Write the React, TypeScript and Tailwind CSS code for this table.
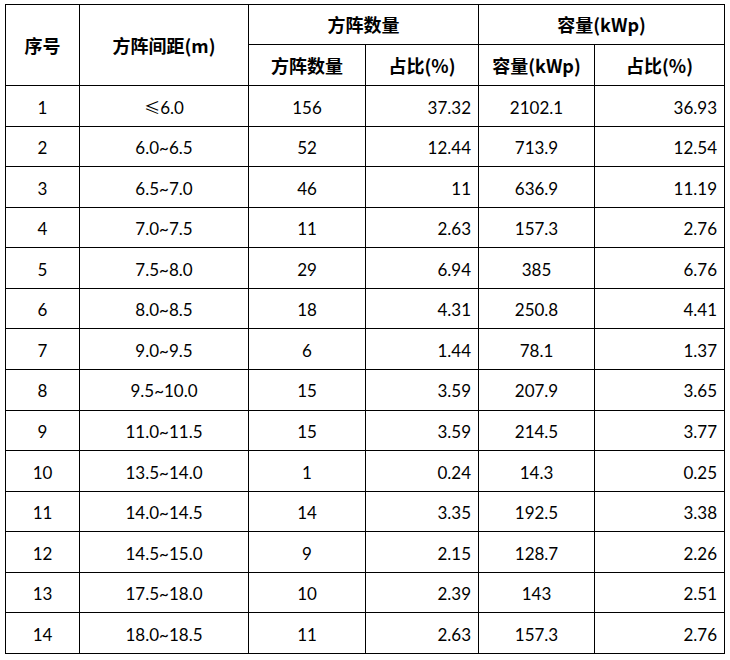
import React from "react";

type Row = {
  no: number;
  spacing: string;
  count: string;
  countPct: string;
  cap: string;
  capPct: string;
};

const rows: Row[] = [
  { no: 1, spacing: "6.0", count: "156", countPct: "37.32", cap: "2102.1", capPct: "36.93" },
  { no: 2, spacing: "6.0~6.5", count: "52", countPct: "12.44", cap: "713.9", capPct: "12.54" },
  { no: 3, spacing: "6.5~7.0", count: "46", countPct: "11", cap: "636.9", capPct: "11.19" },
  { no: 4, spacing: "7.0~7.5", count: "11", countPct: "2.63", cap: "157.3", capPct: "2.76" },
  { no: 5, spacing: "7.5~8.0", count: "29", countPct: "6.94", cap: "385", capPct: "6.76" },
  { no: 6, spacing: "8.0~8.5", count: "18", countPct: "4.31", cap: "250.8", capPct: "4.41" },
  { no: 7, spacing: "9.0~9.5", count: "6", countPct: "1.44", cap: "78.1", capPct: "1.37" },
  { no: 8, spacing: "9.5~10.0", count: "15", countPct: "3.59", cap: "207.9", capPct: "3.65" },
  { no: 9, spacing: "11.0~11.5", count: "15", countPct: "3.59", cap: "214.5", capPct: "3.77" },
  { no: 10, spacing: "13.5~14.0", count: "1", countPct: "0.24", cap: "14.3", capPct: "0.25" },
  { no: 11, spacing: "14.0~14.5", count: "14", countPct: "3.35", cap: "192.5", capPct: "3.38" },
  { no: 12, spacing: "14.5~15.0", count: "9", countPct: "2.15", cap: "128.7", capPct: "2.26" },
  { no: 13, spacing: "17.5~18.0", count: "10", countPct: "2.39", cap: "143", capPct: "2.51" },
  { no: 14, spacing: "18.0~18.5", count: "11", countPct: "2.63", cap: "157.3", capPct: "2.76" },
];

const th =
  "border border-black text-center align-middle font-bold text-[18px] text-black [font-family:'Noto_Sans_CJK_SC',sans-serif]";
const td = "border border-black align-middle text-[17px] text-black pt-[3px]";

const App = () => {
  return (
    <div className="min-h-[660px] w-[730px] bg-white pl-[5px] pt-[4px]">
      <table className="table-fixed border-collapse w-[719px] h-[650px] [font-family:Lato,'Noto_Sans_CJK_SC',sans-serif]">
        <colgroup>
          <col className="w-[74px]" />
          <col className="w-[169px]" />
          <col className="w-[117px]" />
          <col className="w-[113px]" />
          <col className="w-[116px]" />
          <col className="w-[130px]" />
        </colgroup>
        <thead>
          <tr className="h-[40px]">
            <th rowSpan={2} className={th}>
              序号
            </th>
            <th rowSpan={2} className={th}>
              方阵间距(m)
            </th>
            <th colSpan={2} className={th}>
              方阵数量
            </th>
            <th colSpan={2} className={th}>
              容量(kWp)
            </th>
          </tr>
          <tr className="h-[41px]">
            <th className={th}>方阵数量</th>
            <th className={th}>占比(%)</th>
            <th className={th}>容量(kWp)</th>
            <th className={th}>占比(%)</th>
          </tr>
        </thead>
        <tbody>
          {rows.map((r) => (
            <tr key={r.no} className="h-[40px]">
              <td className={`${td} text-center`}>{r.no}</td>
              <td className={`${td} text-center`}>
                {r.no === 1 && (
                  <span className="[font-family:'Noto_Sans_CJK_SC',sans-serif] text-[16px]">
                    ≤
                  </span>
                )}
                {r.spacing}
              </td>
              <td className={`${td} text-center`}>{r.count}</td>
              <td className={`${td} text-right pr-[7px]`}>{r.countPct}</td>
              <td className={`${td} text-center`}>{r.cap}</td>
              <td className={`${td} text-right pr-[7px]`}>{r.capPct}</td>
            </tr>
          ))}
        </tbody>
      </table>
    </div>
  );
};

export default App;
